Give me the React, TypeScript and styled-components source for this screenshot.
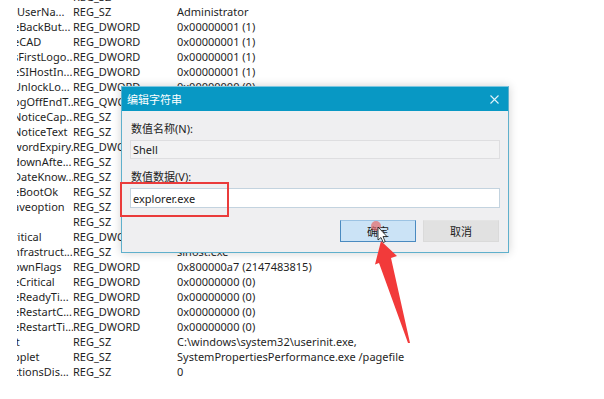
import styled, { createGlobalStyle } from "styled-components";

const GlobalStyle = createGlobalStyle`
  html, body {
    margin: 0;
    padding: 0;
    background: #ffffff;
  }
  body {
    font-family: "Noto Sans", "Noto Sans CJK SC", sans-serif;
  }
`;

// rows behind the dialog keep their type column only, the rest is hidden anyway
const rows: Array<[string, string, string]> = [
  ["", "REG_SZ", ""],
  ["tUserNa...", "REG_SZ", "Administrator"],
  ["eBackBut...", "REG_DWORD", "0x00000001 (1)"],
  ["eCAD", "REG_DWORD", "0x00000001 (1)"],
  ["sFirstLogo...", "REG_DWORD", "0x00000001 (1)"],
  ["eSIHostIn...", "REG_DWORD", "0x00000001 (1)"],
  ["UnlockLo...", "REG_DWORD", "0x00000000 (0)"],
  ["ogOffEndT...", "REG_QWORD", ""],
  ["NoticeCap...", "REG_SZ", ""],
  ["NoticeText", "REG_SZ", ""],
  ["wordExpiry...", "REG_DWORD", ""],
  ["downAfte...", "REG_SZ", ""],
  ["DateKnow...", "REG_SZ", ""],
  ["eBootOk", "REG_SZ", ""],
  ["aveoption", "REG_SZ", ""],
  ["", "REG_SZ", ""],
  ["ritical", "REG_DWORD", ""],
  ["nfrastruct...", "REG_SZ", "sihost.exe"],
  ["ownFlags", "REG_DWORD", "0x800000a7 (2147483815)"],
  ["eCritical", "REG_DWORD", "0x00000000 (0)"],
  ["eReadyTi...", "REG_DWORD", "0x00000000 (0)"],
  ["eRestartC...", "REG_DWORD", "0x00000000 (0)"],
  ["eRestartTi...", "REG_DWORD", "0x00000000 (0)"],
  ["it", "REG_SZ", "C:\\windows\\system32\\userinit.exe,"],
  ["pplet", "REG_SZ", "SystemPropertiesPerformance.exe /pagefile"],
  ["ctionsDis...", "REG_SZ", "0"],
];

const Page = styled.div`
  position: relative;
  width: 604px;
  height: 399px;
  overflow: hidden;
  background: #ffffff;
`;

const List = styled.div`
  display: flex;
  flex-direction: column;
  margin-top: -11px;
`;

const Row = styled.div`
  display: grid;
  grid-template-columns: 17px 56px 104px 1fr;
  height: 15px;
  line-height: 15px;
  font-size: 11px;
  color: #1f1f1f;
  white-space: nowrap;
`;

const NameCell = styled.div`
  grid-column: 2;
  overflow: hidden;
  span {
    display: inline-block;
    margin-left: -4px;
  }
`;

const Cell = styled.div`
  overflow: visible;
`;

const Dialog = styled.div`
  position: absolute;
  left: 121px;
  top: 86px;
  width: 388px;
  height: 167px;
  box-sizing: border-box;
  display: flex;
  flex-direction: column;
  background: #efeff1;
  border: 1px solid #5fb0cc;
  border-top-color: #7cc6e0;
  box-shadow: 0 0 9px rgba(0, 0, 0, 0.18);
`;

const TitleBar = styled.div`
  height: 24px;
  background: #0898c4;
  display: flex;
  align-items: center;
  justify-content: space-between;
  padding: 0 9px 0 5px;
  color: #ffffff;
  font-size: 11px;
`;

const CloseIcon = styled.svg`
  width: 9px;
  height: 9px;
`;

const Body = styled.div`
  display: flex;
  flex-direction: column;
  padding: 11px 8px 0 8px;
`;

const Label = styled.div`
  font-size: 11px;
  line-height: 14px;
  color: #222222;
  padding-left: 1px;
`;

const Field = styled.div<{ $readOnly?: boolean }>`
  box-sizing: border-box;
  height: ${(p) => (p.$readOnly ? "19px" : "20px")};
  margin-top: 4px;
  margin-bottom: ${(p) => (p.$readOnly ? "11px" : "12px")};
  padding-left: 2px;
  display: flex;
  align-items: center;
  font-size: 11px;
  color: #1a1a1a;
  background: ${(p) => (p.$readOnly ? "#f2f2f3" : "#ffffff")};
  border: 1px solid ${(p) => (p.$readOnly ? "#dedee0" : "#c3d3df")};
`;

const ButtonRow = styled.div`
  display: flex;
  justify-content: flex-end;
  gap: 7px;
  padding-right: 1px;
`;

const Button = styled.div<{ $primary?: boolean }>`
  box-sizing: border-box;
  width: 76px;
  height: 22px;
  display: flex;
  align-items: center;
  justify-content: center;
  font-size: 11px;
  color: #1a1a1a;
  background: ${(p) => (p.$primary ? "#cbe3f6" : "#e1e1e1")};
  border: 1px solid ${(p) => (p.$primary ? "#4a8ac0" : "#dadada")};
  border-top-color: ${(p) => (p.$primary ? "#9cc3e3" : "#e4e4e4")};
`;

const Highlight = styled.div`
  position: absolute;
  left: 120px;
  top: 182px;
  width: 109px;
  height: 35px;
  box-sizing: border-box;
  border: 2px solid #ea3b3b;
`;

const Overlay = styled.svg`
  position: absolute;
  left: 0;
  top: 0;
  width: 604px;
  height: 399px;
  pointer-events: none;
`;

export default function App() {
  return (
    <Page>
      <GlobalStyle />
      <List>
        {rows.map(([name, type, data], i) => (
          <Row key={i}>
            <NameCell>
              <span>{name}</span>
            </NameCell>
            <Cell>{type}</Cell>
            <Cell>{data}</Cell>
          </Row>
        ))}
      </List>

      <Dialog>
        <TitleBar>
          <span>编辑字符串</span>
          <CloseIcon viewBox="0 0 9 9">
            <path d="M0.5 0.5 L8.5 8.5 M8.5 0.5 L0.5 8.5" stroke="#dff3fa" strokeWidth="1.1" />
          </CloseIcon>
        </TitleBar>
        <Body>
          <Label>数值名称(N):</Label>
          <Field $readOnly>Shell</Field>
          <Label>数值数据(V):</Label>
          <Field>explorer.exe</Field>
          <ButtonRow>
            <Button $primary>确定</Button>
            <Button>取消</Button>
          </ButtonRow>
        </Body>
      </Dialog>

      <Highlight />

      <Overlay viewBox="0 0 604 399">
        <circle cx="376" cy="226" r="5" fill="#e66a6a" opacity="0.7" />
        <path
          d="M378 227 L378 240 L381 237.5 L383.3 242.5 L385.2 241.6 L383 236.6 L387 236.6 Z"
          fill="#ffffff"
          stroke="#111111"
          strokeWidth="0.8"
        />
        <path
          d="M381 241 L397 256 L391 258 L410 343 L408 343 L379 263 L375 264.5 Z"
          fill="#f23a3a"
        />
      </Overlay>
    </Page>
  );
}
